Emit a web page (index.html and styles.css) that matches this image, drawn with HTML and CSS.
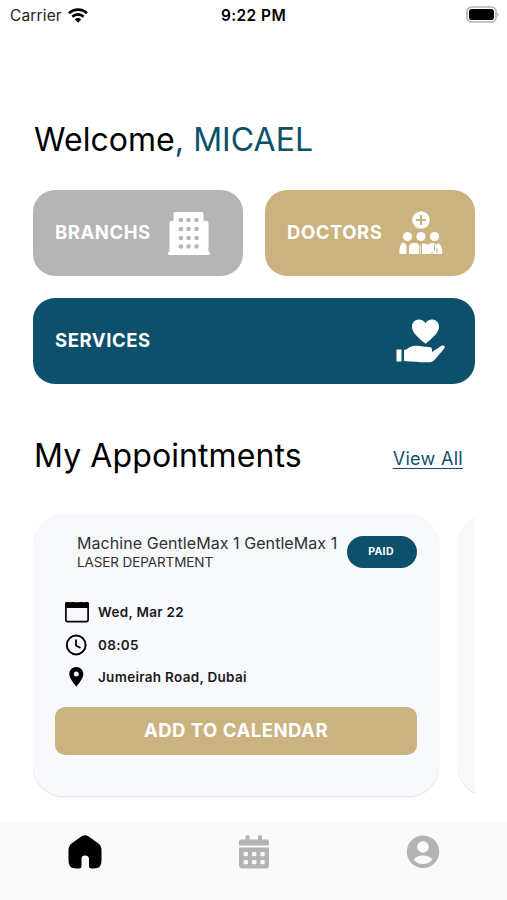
FILE: index.html
```html
<!DOCTYPE html>
<html lang="en">
<head>
<meta charset="utf-8">
<title>Home</title>
<link rel="stylesheet" href="styles.css">
</head>
<body>
<div class="screen">
  <header class="status">
    <div class="carrier"><span>Carrier</span>
      <svg width="20" height="15" viewBox="0 0 20 15"><g fill="none" stroke="#000" stroke-width="2.7"><path d="M1 5.2C6 .4 14 .4 19 5.2"/><path d="M4.3 8.7c3.3-3 8.100-3 11.400 0"/></g><path d="M6.700 11.300c2-1.700 4.600-1.700 6.600 0L10 14.700z"/></svg>
    </div>
    <div class="time">9:22 PM</div>
    <div class="power">
      <svg width="34" height="17" viewBox="0 0 34 17"><rect x="1" y="1" width="29" height="15" rx="4.500" fill="#fff" stroke="#b5b5b5" stroke-width="1.700"/><rect x="3" y="3" width="25" height="11" rx="2.800"/><path d="M31.500 6.300c1.600.7 1.600 3.700 0 4.400z" fill="#aaa"/></svg>
    </div>
  </header>

  <main class="content">
    <h1 class="greeting">Welcome<span class="name">, MICAEL</span></h1>

    <section class="tiles">
      <a class="tile branches"><span>BRANCHS</span>
        <svg class="building" width="42" height="43" viewBox="0 0 42 43"><path fill="#fff" d="M7 0h27q1.500 0 1.500 1.500V9H39q1.500 0 1.500 1.500V39.500q1.500 0 1.500 1.700Q42 43 40.500 43h-39Q0 43 0 41.200q0-1.700 1.500-1.700V10.500Q1.500 9 3 9h2.500V1.500Q5.500 0 7 0z"/><g fill="#b5b5b5"><circle cx="13" cy="8" r="2.300"/><circle cx="20.500" cy="8" r="2.300"/><circle cx="28.500" cy="8" r="2.300"/><circle cx="13" cy="17" r="2.300"/><circle cx="20.500" cy="17" r="2.300"/><circle cx="28.500" cy="17" r="2.300"/><circle cx="13" cy="26" r="2.300"/><circle cx="20.500" cy="26" r="2.300"/><circle cx="28.500" cy="26" r="2.300"/><circle cx="13" cy="34.500" r="2.300"/><circle cx="20.500" cy="34.500" r="2.300"/><circle cx="28.500" cy="34.500" r="2.300"/></g></svg>
      </a>
      <a class="tile doctors"><span>DOCTORS</span>
        <svg class="team" width="44" height="44" viewBox="0 0 44 44"><g fill="#fff"><circle cx="22" cy="9" r="8.800"/><circle cx="8.500" cy="25.500" r="4.600"/><circle cx="22" cy="25.500" r="4.600"/><circle cx="35.500" cy="25.500" r="4.600"/><path d="M.5 43V39q0-4.500 3-7.500l1.500 0 2.500 3V43zM10 43V36q0-3 3.500-4h4l2.500 2v9zM20.800 34h.9v9h-.9zM23 43V32.500h3.500L29 34l2.500-2h3l2.500 2 2.500-2q3.500 2 4 11z"/></g><path d="M22 4v10M17 9h10" stroke="#cab37f" stroke-width="2.200"/><path d="M35.500 34v5.500M38 37v5M33 41v2" stroke="#cab37f" stroke-width="1"/></svg>
      </a>
      <a class="tile services"><span>SERVICES</span>
        <svg class="care" width="50" height="44" viewBox="0 0 50 44"><g fill="#fff"><path d="M29.500 24.800C23 19 16 14.500 16 7.500 16 3.500 19 .5 22.700.5c3 0 5.300 1.300 6.800 3.700C31 1.800 33.300.5 36.300.5 40 .5 43 3.500 43 7.500c0 7-7 11.500-13.500 17.300z"/><rect x=".5" y="30.500" width="5" height="12"/><path d="M8 31c4-.5 5-3.500 9.500-4 6-1 10 1 15.500 1 2.500.2 3.500 1.500 3 5l9.500-6.200c2.500-1 4.500.7 2.500 3L38.500 41c-2 2-4 2.300-7 2.300-8 0-16-.8-23.500-1.300z"/></g></svg>
      </a>
    </section>

    <div class="section-head"><h2>My Appointments</h2><a class="view-all">View All</a></div>

    <section class="carousel">
      <article class="card">
        <div class="card-head">
          <div class="treatment"><div class="title">Machine GentleMax 1 GentleMax 1</div><div class="department">LASER DEPARTMENT</div></div>
          <span class="badge">PAID</span>
        </div>
        <ul class="details">
          <li><svg width="24" height="22" viewBox="0 0 24 22"><rect x=".9" y="2.200" width="22.200" height="18.400" rx="1.500" fill="none" stroke="#000" stroke-width="1.700"/><path d="M0 7V2.500Q0 1 1.500 1h2L4 2.200h2L6.500 1h3l.5 1.200h4l.5-1.200h3l.5 1.200h2l.5-1.200h2Q24 1 24 2.500V7z"/></svg><span>Wed, Mar 22</span></li>
          <li><svg width="24" height="22" viewBox="0 0 24 22"><circle cx="11.200" cy="11" r="9.400" fill="none" stroke="#000" stroke-width="2"/><path d="M11 5.500v6l4.500 2.500" fill="none" stroke="#000" stroke-width="1.800"/></svg><span>08:05</span></li>
          <li><svg width="24" height="22" viewBox="0 0 24 22"><path fill-rule="evenodd" d="M11.300 1C15.300 1 18.300 4 18.300 8c0 4.500-5 10-7 12.700C9.300 18 4.300 12.500 4.300 8c0-4 3-7 7-7zm0 4.500a2.500 2.500 0 1 0 0 5 2.500 2.500 0 0 0 0-5z"/></svg><span>Jumeirah Road, Dubai</span></li>
        </ul>
        <button class="add">ADD TO CALENDAR</button>
      </article>
      <article class="card next"></article>
    </section>
  </main>

  <nav class="tabs">
    <a><svg width="34" height="34" viewBox="0 0 34 34"><path d="M13.300 1.500Q17-1 20.700 1.500L30.500 8.500Q33.500 11 33.500 15V26Q33.500 33.500 26 33.500H23.500Q21 33.500 21 31V24Q21 20.500 17.200 20.500T13.500 24V31Q13.500 33.500 11 33.500H8Q.5 33.500.5 26V15Q.5 11 3.500 8.500z"/></svg></a>
    <a><svg width="30" height="34" viewBox="0 0 30 34"><g fill="#b3b3b3"><rect x="6.500" y="0" width="4" height="8" rx="1.800"/><rect x="19" y="0" width="4" height="8" rx="1.800"/><path d="M0 10.500V7q0-2.500 2.500-2.500h25q2.500 0 2.500 2.500v3.500zM0 12.500h30V30q0 3.500-3.500 3.500h-23Q0 33.500 0 30z"/></g><g fill="#fafafa"><rect x="4.600" y="17" width="4.400" height="4.200" rx="1"/><rect x="13" y="17" width="4.400" height="4.200" rx="1"/><rect x="21.300" y="17" width="4.400" height="4.200" rx="1"/><rect x="4.600" y="25" width="4.400" height="4.200" rx="1"/><rect x="13" y="25" width="4.400" height="4.200" rx="1"/><rect x="21.300" y="25" width="4.400" height="4.200" rx="1"/></g></svg></a>
    <a><svg width="34" height="34" viewBox="0 0 34 34"><circle cx="17" cy="16.700" r="16.200" fill="#b3b3b3"/><circle cx="17" cy="12" r="5.800" fill="#fafafa"/><path d="M7.500 24.500Q11 20.500 17 20.500T26.500 24.500Q23 29 17 29T7.500 24.500z" fill="#fafafa"/></svg></a>
  </nav>
</div>
</body>
</html>
```

FILE: styles.css
```css
* { box-sizing: border-box; }
body { margin: 0; background: #fff; color: #000; font-family: Inter, "Liberation Sans", sans-serif; }
svg { display: block; flex: none; }
.screen { width: 507px; height: 900px; display: flex; flex-direction: column; overflow: hidden; }

.status { height: 30px; display: grid; grid-template-columns: 1fr auto 1fr; align-items: center; padding: 0 7px 0 10px; font-size: 15.5px; }
.carrier { display: flex; align-items: center; gap: 6px; letter-spacing: .15px; color: #222; }
.time { font-weight: 600; letter-spacing: .4px; margin-right: 3px; }
.power { display: flex; justify-content: flex-end; margin-top: -2px; }

.content { flex: 1; padding: 90px 32px 0 33px; }
.greeting, h2 { margin: 0; font-size: 32px; line-height: 40px; font-weight: 400; white-space: nowrap; }
.greeting { letter-spacing: .05px; padding-left: 1px; }
.name { color: #0c506c; }

.tiles { margin-top: 30px; display: grid; grid-template-columns: 210px 210px; gap: 22px; }
.tile { height: 86px; border-radius: 22px; padding: 0 22px; display: flex; align-items: center; justify-content: space-between; color: #fff; font-size: 18.500px; font-weight: 700; letter-spacing: .55px; }
.tile span { padding-bottom: 3px; }
.branches { background: #b5b5b5; padding-right: 33px; }
.doctors { background: #cab37f; padding-right: 32px; }
.services { background: #0c506c; grid-column: span 2; padding-right: 29px; }

.section-head { margin-top: 52px; display: flex; justify-content: space-between; align-items: center; padding-right: 12px; }
h2 { letter-spacing: .1px; padding-left: 1px; }
.view-all { color: #0c506c; font-size: 18px; letter-spacing: .3px; text-decoration: underline; text-underline-offset: 3px; text-decoration-thickness: 1px; margin-top: 5px; }

.carousel { margin-top: 38px; height: 290px; display: flex; gap: 19px; overflow: hidden; }
.card { flex: none; width: 406px; height: 282px; border-radius: 30px; background: #f7f9fd; box-shadow: 0 1px 1px rgba(0, 0, 0, .13); padding: 0 22px; }
.card-head { height: 72px; display: flex; justify-content: space-between; border-bottom: 3px solid #fafbfe; }
.treatment { padding: 18px 0 0 22px; color: #303030; white-space: nowrap; }
.title { font-size: 16px; line-height: 22px; letter-spacing: .06px; }
.department { font-size: 13.500px; line-height: 17px; letter-spacing: -.1px; }
.badge { margin-top: 22px; width: 70px; height: 32px; flex: none; border-radius: 16px; background: #0c506c; color: #fff; font-size: 10.500px; font-weight: 700; line-height: 31px; text-align: center; letter-spacing: .35px; padding-right: 2px; }
.details { list-style: none; margin: 0; padding: 10px 0 0 10px; }
.details li { height: 32.500px; display: flex; align-items: center; gap: 9px; font-size: 13.500px; font-weight: 600; letter-spacing: .3px; color: #1a1a1a; }
.add { display: block; margin: 13.500px 0 0; width: 362px; height: 48px; border: 0; border-radius: 10px; background: #cab37f; color: #fff; font: 700 18.500px Inter, sans-serif; letter-spacing: .5px; padding: 0 0 3px; }

.tabs { height: 78px; background: #fafafa; display: grid; grid-template-columns: repeat(3, 1fr); justify-items: center; padding-top: 13px; }
```
